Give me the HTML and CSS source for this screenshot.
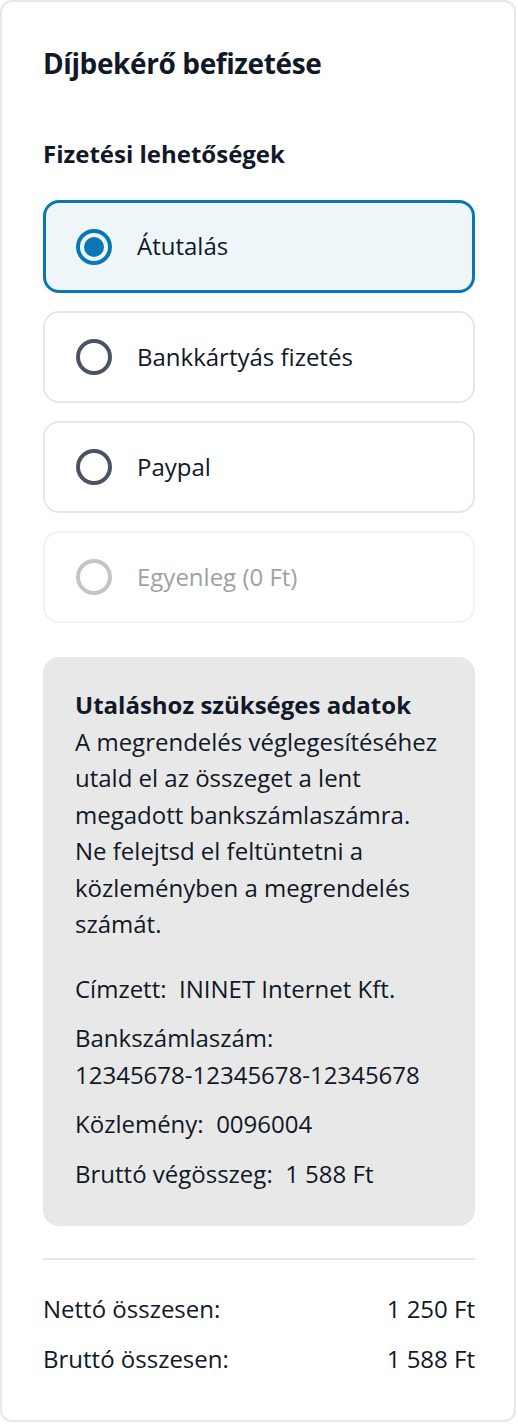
FILE: index.html
```html
<!DOCTYPE html>
<html lang="hu">
<head>
<meta charset="utf-8">
<title>Díjbekérő befizetése</title>
<link rel="stylesheet" href="styles.css">
</head>
<body>
<div class="card">
  <h1 class="title">Díjbekérő befizetése</h1>
  <h2 class="subtitle">Fizetési lehetőségek</h2>
  <div class="options">
    <label class="option selected">
      <span class="radio"><span class="dot"></span></span>
      <span class="option-label">Átutalás</span>
    </label>
    <label class="option">
      <span class="radio"></span>
      <span class="option-label">Bankkártyás fizetés</span>
    </label>
    <label class="option">
      <span class="radio"></span>
      <span class="option-label">Paypal</span>
    </label>
    <label class="option disabled">
      <span class="radio"></span>
      <span class="option-label">Egyenleg (0 Ft)</span>
    </label>
  </div>
  <div class="info">
    <div class="info-title">Utaláshoz szükséges adatok</div>
    <p class="info-text">A megrendelés véglegesítéséhez utald el az összeget a lent megadott bankszámlaszámra. Ne felejtsd el feltüntetni a közleményben a megrendelés számát.</p>
    <div class="info-item"><span class="label">Címzett:&nbsp;</span> <span class="value">ININET Internet Kft.</span></div>
    <div class="info-item"><span class="label">Bankszámlaszám:&nbsp;</span> <span class="value">12345678-12345678-12345678</span></div>
    <div class="info-item"><span class="label">Közlemény:&nbsp;</span> <span class="value">0096004</span></div>
    <div class="info-item"><span class="label">Bruttó végösszeg:&nbsp;</span> <span class="value">1 588 Ft</span></div>
  </div>
  <hr class="divider">
  <div class="totals">
    <div class="total-row"><span>Nettó összesen:</span><span>1 250 Ft</span></div>
    <div class="total-row"><span>Bruttó összesen:</span><span>1 588 Ft</span></div>
  </div>
</div>
</body>
</html>
```

FILE: styles.css
```css
* { box-sizing: border-box; }

html, body {
  margin: 0;
  padding: 0;
  background: #ffffff;
}

body {
  font-family: "Open Sans", "Noto Sans", sans-serif;
  color: #111827;
  font-size: 24px;
  line-height: 36.5px;
}

.card {
  width: 516px;
  height: 1422px;
  border: 2px solid #e7e7eb;
  border-radius: 12px;
  background: #ffffff;
  padding: 43px 39px 0 41px;
}

.title {
  margin: 0;
  font-size: 28px;
  line-height: 36px;
  font-weight: 700;
  letter-spacing: -0.4px;
}

.subtitle {
  margin: 55px 0 0;
  font-size: 24px;
  line-height: 36px;
  font-weight: 700;
}

.options {
  margin-top: 28px;
  display: flex;
  flex-direction: column;
  gap: 18px;
}

.option {
  height: 92px;
  display: flex;
  align-items: center;
  gap: 25px;
  padding-left: 31px;
  border: 2px solid #e6e7eb;
  border-radius: 16px;
  background: #ffffff;
}

.option.selected {
  border: 3px solid #0a77b4;
  background: #eef6fa;
  padding-left: 30px;
  height: 93px;
}

.radio {
  width: 36px;
  height: 36px;
  border-radius: 50%;
  border: 4px solid #4b5261;
  display: flex;
  align-items: center;
  justify-content: center;
  flex: none;
}

.option.selected .radio {
  border-color: #0a77b4;
}

.dot {
  width: 20px;
  height: 20px;
  border-radius: 50%;
  background: #0a77b4;
}

.option.disabled {
  border-color: #f1f2f4;
}

.option.disabled .radio {
  border-color: #c3c5c9;
}

.option.disabled .option-label {
  color: #9da1a6;
}

.info {
  margin-top: 34px;
  background: #e8e8e8;
  border-radius: 16px;
  padding: 30px 32px 34px 32px;
}

.info-title {
  font-weight: 700;
}

.info-text {
  margin: 0;
}

.info-item {
  margin-top: 13px;
}

.info-text + .info-item {
  margin-top: 28px;
}

.value {
  white-space: nowrap;
}

.divider {
  margin: 32px 0 0;
  border: 0;
  height: 2px;
  background: #e6e6ea;
}

.totals {
  margin-top: 31px;
  display: flex;
  flex-direction: column;
  gap: 13.5px;
}

.total-row {
  display: flex;
  justify-content: space-between;
}
```
